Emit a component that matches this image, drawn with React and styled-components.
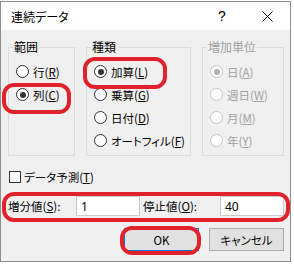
import React from "react";
import styled, { createGlobalStyle } from "styled-components";

const GlobalStyle = createGlobalStyle`
  html, body {
    margin: 0;
    padding: 0;
  }
  body {
    font-family: "Noto Sans CJK JP", "Noto Sans", sans-serif;
    font-size: 11.5px;
    color: #000;
    font-feature-settings: "palt";
  }
`;

const Screen = styled.div`
  position: relative;
  width: 294px;
  height: 265px;
  padding-top: 1px;
  box-sizing: border-box;
  overflow: hidden;
  background: #fff;
`;
const Dialog = styled.div`
  width: 291px;
  height: 261px;
  box-sizing: border-box;
  border: 1px solid #8e8e8e;
  background: #f0f0f0;
  display: flex;
  flex-direction: column;
`;
const TitleBar = styled.div`
  height: 28px;
  flex: none;
  background: #fff;
  display: flex;
  align-items: center;
`;
const Title = styled.div`
  flex: 1;
  padding-left: 10px;
  font-size: 12px;
`;
const CaptionButton = styled.div`
  width: ${(p) => p.$w}px;
  height: 28px;
  display: flex;
  align-items: center;
  justify-content: center;
  font-family: "Liberation Sans", sans-serif;
  font-size: 14px;
`;
const Body = styled.div`
  flex: 1;
  padding: 10px 6px 0 7px;
  display: flex;
  flex-direction: column;
`;
const Groups = styled.div`
  display: flex;
  gap: 11px;
`;
const Group = styled.fieldset`
  margin: 0;
  padding: 0;
  width: ${(p) => p.$w}px;
  height: 116px;
  box-sizing: border-box;
  border: 1px solid #dcdcdc;
  min-width: 0;
`;
const Legend = styled.legend`
  margin-left: 4px;
  padding: 0 1px;
  line-height: 14px;
  font-size: 12px;
  color: ${(p) => (p.$disabled ? "#a0a0a0" : "#000")};
`;
const Options = styled.div`
  margin-top: 6px;
  padding-left: 7px;
  display: flex;
  flex-direction: column;
`;
const Option = styled.div`
  height: 23px;
  display: flex;
  align-items: center;
  gap: 4px;
  white-space: nowrap;
  color: ${(p) => (p.$disabled ? "#a0a0a0" : "#000")};
`;
const Radio = styled.span`
  position: relative;
  width: 13px;
  height: 13px;
  box-sizing: border-box;
  flex: none;
  border-radius: 50%;
  background: #fff;
  border: 1px solid ${(p) => (p.$disabled ? "#c4c4c4" : "#333")};
  &::after {
    content: "";
    display: ${(p) => (p.$checked ? "block" : "none")};
    position: absolute;
    left: 2.5px;
    top: 2.5px;
    width: 6px;
    height: 6px;
    border-radius: 50%;
    background: ${(p) => (p.$disabled ? "#b0b0b0" : "#333")};
  }
`;
const Key = styled.u`
  text-decoration: underline;
  text-underline-offset: 1px;
`;
const CheckRow = styled.div`
  margin-top: 14px;
  height: 14px;
  display: flex;
  align-items: center;
  gap: 3px;
`;
const Check = styled.span`
  width: 12px;
  height: 12px;
  margin-left: 1px;
  box-sizing: border-box;
  border: 1px solid #333;
  background: #fff;
`;
const FieldRow = styled.div`
  margin-top: 12px;
  height: 20px;
  display: flex;
  align-items: center;
`;
const FieldLabel = styled.div`
  width: ${(p) => p.$w}px;
  padding-left: ${(p) => p.$pad || 0}px;
  box-sizing: border-box;
  white-space: nowrap;
`;
const Field = styled.div`
  width: 64px;
  height: 20px;
  box-sizing: border-box;
  border: 1px solid #c9c9c9;
  background: #fff;
  padding-left: 4px;
  display: flex;
  align-items: center;
  font-family: "Noto Sans", sans-serif;
  font-size: 12px;
`;
const Buttons = styled.div`
  margin-top: 12px;
  display: flex;
  justify-content: flex-end;
  gap: 10px;
`;
const Button = styled.div`
  width: 75px;
  height: 23px;
  box-sizing: border-box;
  border: 1px solid ${(p) => (p.$default ? "#0078d7" : "#adadad")};
  background: #e1e1e1;
  display: flex;
  align-items: center;
  justify-content: center;
`;
const Mark = styled.div`
  position: absolute;
  left: ${(p) => p.$x}px;
  top: ${(p) => p.$y}px;
  width: ${(p) => p.$w}px;
  height: ${(p) => p.$h}px;
  box-sizing: border-box;
  border: 4px solid #e0222c;
  border-radius: 12px;
  pointer-events: none;
`;

const Opt = ({ label, k, checked, disabled }) => (
  <Option $disabled={disabled}>
    <Radio $checked={checked} $disabled={disabled} />
    <span>
      {label}(<Key>{k}</Key>)
    </span>
  </Option>
);

export default function App() {
  return (
    <>
      <GlobalStyle />
      <Screen>
        <Dialog>
          <TitleBar>
            <Title>連続データ</Title>
            <CaptionButton $w={46}>?</CaptionButton>
            <CaptionButton $w={45}>
              <svg width="11" height="11" viewBox="0 0 11 11">
                <path d="M0.5 0.5 L10.5 10.5 M10.5 0.5 L0.5 10.5" stroke="#000" strokeWidth="1" />
              </svg>
            </CaptionButton>
          </TitleBar>
          <Body>
            <Groups>
              <Group $w={67}>
                <Legend>範囲</Legend>
                <Options>
                  <Opt label="行" k="R" />
                  <Opt label="列" k="C" checked />
                </Options>
              </Group>
              <Group $w={105}>
                <Legend>種類</Legend>
                <Options>
                  <Opt label="加算" k="L" checked />
                  <Opt label="乗算" k="G" />
                  <Opt label="日付" k="D" />
                  <Opt label="オートフィル" k="F" />
                </Options>
              </Group>
              <Group $w={82}>
                <Legend $disabled>増加単位</Legend>
                <Options>
                  <Opt label="日" k="A" checked disabled />
                  <Opt label="週日" k="W" disabled />
                  <Opt label="月" k="M" disabled />
                  <Opt label="年" k="Y" disabled />
                </Options>
              </Group>
            </Groups>
            <CheckRow>
              <Check />
              <span>
                データ予測(<Key>T</Key>)
              </span>
            </CheckRow>
            <FieldRow>
              <FieldLabel $w={68}>
                増分値(<Key>S</Key>):
              </FieldLabel>
              <Field>1</Field>
              <FieldLabel $w={80} $pad={3}>
                停止値(<Key>O</Key>):
              </FieldLabel>
              <Field>40</Field>
            </FieldRow>
            <Buttons>
              <Button $default>OK</Button>
              <Button>キャンセル</Button>
            </Buttons>
          </Body>
        </Dialog>
        <Mark $x={2} $y={83} $w={69} $h={31} />
        <Mark $x={83} $y={57} $w={84} $h={32} />
        <Mark $x={2} $y={192} $w={288} $h={30} />
        <Mark $x={120} $y={226} $w={81} $h={29} />
      </Screen>
    </>
  );
}
